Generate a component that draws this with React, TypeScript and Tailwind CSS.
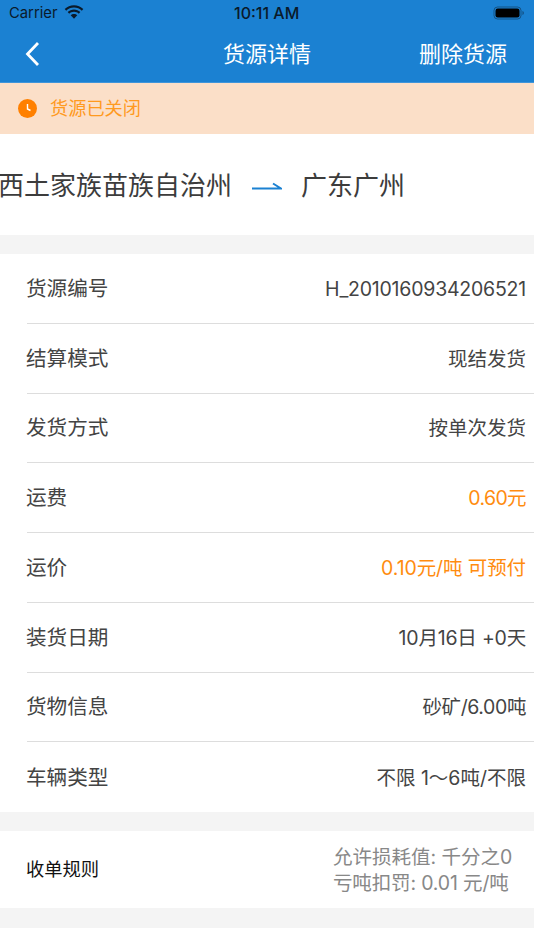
import React from 'react';

const cjk = '"Inter", "Noto Sans CJK SC", sans-serif';

const rows = [
    { label: '货源编号', value: 'H_2010160934206521', tracking: 'tracking-[-0.22px]' },
    { label: '结算模式', value: '现结发货', tracking: '' },
    { label: '发货方式', value: '按单次发货', tracking: '' },
    { label: '运费', value: '0.60元', tracking: 'tracking-[-0.6px]', accent: true },
    { label: '运价', value: '0.10元/吨 可预付', tracking: 'tracking-[-0.1px]', accent: true },
    { label: '装货日期', value: '10月16日 +0天', tracking: 'tracking-[-0.2px]' },
    { label: '货物信息', value: '砂矿/6.00吨', tracking: 'tracking-[-0.4px]' },
    { label: '车辆类型', value: '不限 1～6吨/不限', tracking: '' },
];

const StatusBar = () => (
    <div className="flex h-[26px] items-center justify-between pl-[9px] pr-[9px] text-[14.8px] text-[#0a1a2a]">
        <div className="flex items-center gap-[6px]">
            <span>Carrier</span>
            <svg width="20" height="14" viewBox="0 0 20 14" className="mb-[3px]" fill="#0a1a2a">
                <path d="M10 2.6c3 0 5.700 1.100 7.800 3.100l1.500-1.600C16.800 1.700 13.500.3 10 .3S3.200 1.700.7 4.100l1.500 1.600C4.300 3.700 7 2.600 10 2.600z" />
                <path d="M10 6.800c1.900 0 3.500.7 4.800 1.900l1.500-1.600C14.600 5.500 12.400 4.600 10 4.600s-4.600.9-6.300 2.500l1.500 1.600C6.500 7.500 8.100 6.800 10 6.800z" />
                <path d="M10 8.900c-1.300 0-2.400.5-3.300 1.300L10 13.700l3.300-3.500c-.9-.8-2-1.300-3.300-1.300z" />
            </svg>
        </div>
        <span className="absolute left-[234px] text-[16px] font-medium">10:11 AM</span>
        <svg width="32" height="14" viewBox="0 0 32 14" className="ml-[2px]">
            <rect x="1" y="1" width="27" height="12" rx="3.500" fill="none" stroke="#0a1a2a" strokeOpacity="0.45" />
            <rect x="2.500" y="2.500" width="24" height="9" rx="2.200" fill="#000" />
            <path d="M29.500 5v4c.8-.3 1.300-1.100 1.300-2s-.5-1.700-1.300-2z" fill="#0a1a2a" fillOpacity="0.5" />
        </svg>
    </div>
);

export default function App() {
    return (
        <div className="h-[950px] w-[534px] overflow-hidden bg-white" style={{ fontFamily: cjk }}>
            {/* Header */}
            <div className="relative h-[83px] border-b border-[#3f95da] bg-[#1b81d2]">
                <StatusBar />
                <div className="flex h-[56px] items-center justify-between pl-[25px] pr-[27px] text-white">
                    <svg width="15" height="26" viewBox="0 0 15 26" fill="none" stroke="white" strokeWidth="2.800">
                        <path d="M13 2 L2.500 13 L13 24" />
                    </svg>
                    <span className="absolute left-0 right-0 text-center text-[22px]">货源详情</span>
                    <span className="text-[22px]">删除货源</span>
                </div>
            </div>

            {/* Closed notice */}
            <div className="flex h-[51px] items-center gap-[13px] bg-[#fbdfc8] pl-[18px] text-[18.2px] text-[#ff9a1f]">
                <svg width="19" height="19" viewBox="0 0 19 19">
                    <circle cx="9.500" cy="9.500" r="9.500" fill="#ff8000" />
                    <path d="M9.500 5v5l3 1.500" fill="none" stroke="white" strokeWidth="1.400" />
                </svg>
                <span>货源已关闭</span>
            </div>

            {/* Route */}
            <div className="flex h-[101px] items-center overflow-hidden whitespace-nowrap pt-[2px] text-[26px] text-[#3c3c3c]">
                <div className="flex w-[232px] shrink-0 justify-end">
                    <span className="shrink-0">湖南湘西土家族苗族自治州</span>
                </div>
                <svg width="30" height="10" viewBox="0 0 30 10" className="ml-[20px] mt-[1px]" fill="none" stroke="#1b81d2" strokeWidth="2">
                    <path d="M0 7.500H29L21 2.500" />
                </svg>
                <span className="ml-[19px]">广东广州</span>
            </div>

            <div className="h-[19px] bg-[#f4f4f4]" />

            {/* Detail rows */}
            <div className="pl-[27px]">
                {rows.map((row, i) => (
                    <div
                        key={row.label}
                        className={`flex h-[69.750px] items-center justify-between pr-[8px] pt-[2px] ${i < rows.length - 1 ? 'border-b border-[#dddddd]' : ''}`}
                    >
                        <span className="-ml-[1px] text-[20.600px] text-[#444444]">{row.label}</span>
                        <span className={`text-[19.500px] ${row.tracking} ${row.accent ? 'text-[#ff8c0f]' : 'text-[#444444]'}`}>{row.value}</span>
                    </div>
                ))}
            </div>

            <div className="h-[19px] bg-[#f4f4f4]" />

            {/* Receipt rules */}
            <div className="flex h-[77px] items-center justify-between pl-[26px] pr-[21px] pt-[1px]">
                <span className="text-[18.300px] text-[#111111]">收单规则</span>
                <div className="w-[180px] text-[19.500px] leading-[26px] text-[#888888]">
                    <div>允许损耗值: 千分之0</div>
                    <div className="tracking-[-0.15px]">亏吨扣罚: 0.01 元/吨</div>
                </div>
            </div>

            <div className="h-[20px] bg-[#f4f4f4]" />
        </div>
    );
}
